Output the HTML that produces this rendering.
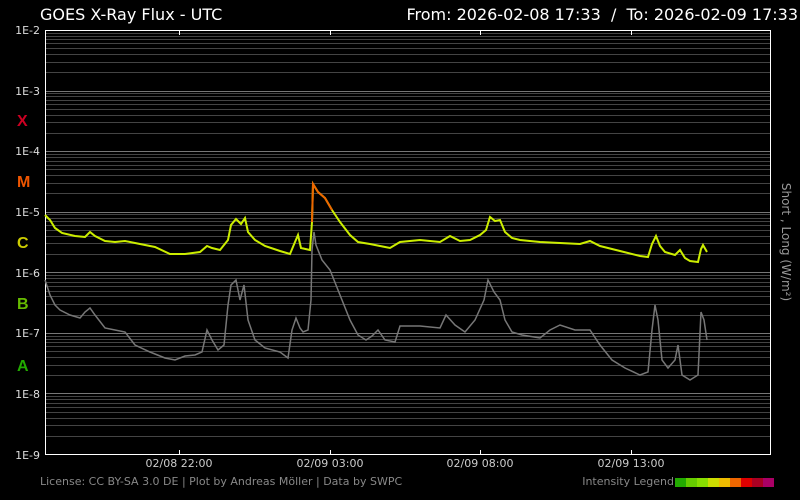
<!DOCTYPE html>
<html><head><meta charset="utf-8"><style>
body{margin:0;background:#000;width:800px;height:500px;overflow:hidden;font-family:"DejaVu Sans","Liberation Sans",sans-serif}
</style></head><body>
<svg id="s" width="800" height="500" xmlns="http://www.w3.org/2000/svg" style="position:absolute;left:0;top:0">
<rect width="800" height="500" fill="#000"/>
<g id="grid"></g>
<rect x="45.5" y="30.5" width="725" height="424" fill="none" stroke="#fff" stroke-width="1"/>
<g stroke="#fff"><line x1="179.5" y1="31" x2="179.5" y2="35"/><line x1="330.5" y1="31" x2="330.5" y2="35"/><line x1="480.5" y1="31" x2="480.5" y2="35"/><line x1="631.5" y1="31" x2="631.5" y2="35"/>
<line x1="179.5" y1="450" x2="179.5" y2="455"/><line x1="330.5" y1="450" x2="330.5" y2="455"/><line x1="480.5" y1="450" x2="480.5" y2="455"/><line x1="631.5" y1="450" x2="631.5" y2="455"/></g>
<text x="40" y="20" fill="#fff" font-size="16">GOES X-Ray Flux - UTC</text>
<text x="798" y="20" fill="#fff" font-size="16" text-anchor="end" xml:space="preserve">From: 2026-02-08 17:33  /  To: 2026-02-09 17:33</text>
<g fill="#ddd" font-size="11" text-anchor="end">
<text x="40" y="34">1E-2</text><text x="40" y="95">1E-3</text><text x="40" y="155">1E-4</text><text x="40" y="216">1E-5</text><text x="40" y="277">1E-6</text><text x="40" y="337">1E-7</text><text x="40" y="398">1E-8</text><text x="40" y="459">1E-9</text></g>
<g font-size="16" font-weight="bold" font-family="Liberation Sans,sans-serif">
<text x="17" y="126" fill="#cc0022">X</text><text x="17" y="187" fill="#ee5500">M</text><text x="17" y="248" fill="#cccc00">C</text><text x="17" y="309" fill="#66bb00">B</text><text x="17" y="371" fill="#22aa00">A</text></g>
<g fill="#ccc" font-size="11" text-anchor="middle">
<text x="179" y="467">02/08 22:00</text><text x="330" y="467">02/09 03:00</text><text x="480" y="467">02/09 08:00</text><text x="631" y="467">02/09 13:00</text></g>
<text transform="translate(782,242) rotate(90)" fill="#999" font-size="12" text-anchor="middle">Short , Long (W/m²)</text>
<text x="40" y="485" fill="#888" font-size="11">License: CC BY-SA 3.0 DE | Plot by Andreas Möller | Data by SWPC</text>
<text x="674" y="485" fill="#888" font-size="11" text-anchor="end">Intensity Legend</text>
<g><rect x="675" y="478" width="11" height="9" fill="#22aa00"/><rect x="686" y="478" width="11" height="9" fill="#66cc00"/><rect x="697" y="478" width="11" height="9" fill="#88dd00"/><rect x="708" y="478" width="11" height="9" fill="#ccdd00"/><rect x="719" y="478" width="11" height="9" fill="#eebb00"/><rect x="730" y="478" width="11" height="9" fill="#ee6600"/><rect x="741" y="478" width="11" height="9" fill="#dd0000"/><rect x="752" y="478" width="11" height="9" fill="#aa0022"/><rect x="763" y="478" width="11" height="9" fill="#aa0066"/></g>
<polyline fill="none" stroke="#777" stroke-width="1.5" points="45,280 50,295 55,305 60,310 70,315 80,318 85,312 90,308 95,315 105,328 115,330 125,332 135,345 150,352 165,358 175,360 185,356 195,355 202,352 207,330 212,340 218,350 224,345 228,305 231,285 236,280 240,300 244,285 248,320 255,340 265,348 280,352 288,358 292,330 296,318 300,328 303,332 308,330 311,300 312,250 314,232 316,245 322,260 330,270 340,295 350,320 358,335 366,340 372,336 378,330 385,340 395,342 400,326 420,326 440,328 446,315 455,325 465,332 475,320 484,300 488,280 494,292 500,300 505,320 512,332 522,335 540,338 550,330 560,325 575,330 590,330 600,345 612,360 625,368 640,375 648,372 652,330 655,305 658,320 662,360 668,368 675,360 678,345 682,375 690,380 698,375 701,312 704,320 707,340"/>
<polyline fill="none" stroke="#ccee00" stroke-width="2" points="45,215 50,220 55,228 62,233 75,236 85,237 90,232 95,236 105,241 115,242 125,241 140,244 155,247 170,254 185,254 200,252 207,246 212,248 220,250 228,240 231,225 236,219 241,224 245,218 248,232 255,240 265,246 280,251 290,254 295,242 298,235 301,248 310,250 312,222 313,184 318,192 325,198 332,210 340,222 350,235 358,242 370,244 380,246 390,248 400,242 420,240 440,242 450,236 460,241 470,240 480,235 486,230 490,217 495,221 500,220 505,232 512,238 520,240 540,242 560,243 580,244 590,241 600,246 620,251 640,256 648,257 652,244 656,236 660,246 665,252 675,255 680,250 685,258 690,261 698,262 701,249 703,245 707,252"/>
<polyline fill="none" stroke="#ee6600" stroke-width="2" points="312,222 313,184 318,192 325,198 332,210"/>
</svg>
<script>
var g=document.getElementById('grid'),h=(454-30)/7,s='';
for(var d=0;d<7;d++){var base=30+(d+1)*h;for(var k=1;k<=10;k++){var y=Math.round(base-Math.log10(k)*h)+0.5;if(y<31||y>454)continue;var c=(k==1||k==10)?'#777':'#444';s+='<line x1="46" x2="770" y1="'+y+'" y2="'+y+'" stroke="'+c+'"/>';}}
g.innerHTML=s;
</script>
</body></html>
